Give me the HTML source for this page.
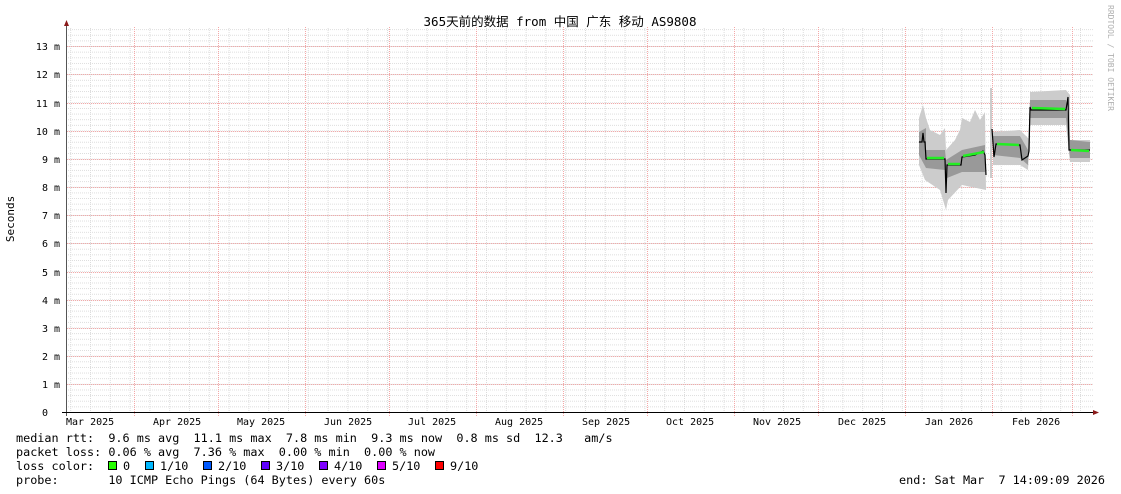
<!DOCTYPE html>
<html><head><meta charset="utf-8"><style>
html,body{margin:0;padding:0;background:#fff;}
svg{display:block;}
text{font-family:"DejaVu Sans Mono","Liberation Mono","Noto Sans CJK SC",monospace;fill:#000;white-space:pre;}
line,rect{shape-rendering:crispEdges;}
</style></head><body>
<svg width="1121" height="494" xmlns="http://www.w3.org/2000/svg">
<defs>
<pattern id="hm" x="0" y="412" width="20" height="5.63" patternUnits="userSpaceOnUse">
<line x1="0" y1="0.5" x2="20" y2="0.5" stroke="#dcdcdc" stroke-width="1" stroke-dasharray="1,1"/>
</pattern>
<pattern id="vm" x="90" y="0" width="19.8" height="10" patternUnits="userSpaceOnUse">
<line x1="0.5" y1="0" x2="0.5" y2="10" stroke="#dcdcdc" stroke-width="1" stroke-dasharray="1,1"/>
</pattern>
</defs>
<rect width="1121" height="494" fill="#fff"/>
<rect x="67" y="27" width="1026" height="385" fill="url(#hm)"/>
<rect x="67" y="27" width="1026" height="385" fill="url(#vm)"/>
<g stroke="#f4a8a8" stroke-width="1" stroke-dasharray="1,1">
<line x1="67" y1="384.5" x2="1093" y2="384.5"/><line x1="67" y1="356.5" x2="1093" y2="356.5"/>
<line x1="67" y1="328.5" x2="1093" y2="328.5"/><line x1="67" y1="300.5" x2="1093" y2="300.5"/>
<line x1="67" y1="272.5" x2="1093" y2="272.5"/><line x1="67" y1="243.5" x2="1093" y2="243.5"/>
<line x1="67" y1="215.5" x2="1093" y2="215.5"/><line x1="67" y1="187.5" x2="1093" y2="187.5"/>
<line x1="67" y1="159.5" x2="1093" y2="159.5"/><line x1="67" y1="131.5" x2="1093" y2="131.5"/>
<line x1="67" y1="103.5" x2="1093" y2="103.5"/><line x1="67" y1="74.5" x2="1093" y2="74.5"/>
<line x1="67" y1="46.5" x2="1093" y2="46.5"/>
<line x1="134.5" y1="27" x2="134.5" y2="416"/><line x1="218.5" y1="27" x2="218.5" y2="416"/>
<line x1="305.5" y1="27" x2="305.5" y2="416"/><line x1="389.5" y1="27" x2="389.5" y2="416"/>
<line x1="476.5" y1="27" x2="476.5" y2="416"/><line x1="563.5" y1="27" x2="563.5" y2="416"/>
<line x1="647.5" y1="27" x2="647.5" y2="416"/><line x1="734.5" y1="27" x2="734.5" y2="416"/>
<line x1="818.5" y1="27" x2="818.5" y2="416"/><line x1="905.5" y1="27" x2="905.5" y2="416"/>
<line x1="992.5" y1="27" x2="992.5" y2="416"/><line x1="1072.5" y1="27" x2="1072.5" y2="416"/>
</g>
<!-- data -->
<g fill="#cccccc">
<polygon points="919,118 923,105 926,118 930,130 940,135 945,128 946,150 955,140 960,130 962,118 970,122 975,110 980,120 985,112 986,190 962,185 948,200 946,210 940,190 925,180 919,165"/>
<rect x="990" y="88" width="2" height="90"/>
<polygon points="993,132 1020,130 1030,140 1030,92 1066,90 1070,95 1070,140 1090,140 1090,162 1070,162 1066,125 1030,125 1028,170 1020,165 993,165"/>
</g>
<g fill="#999">
<polygon points="919,132 926,128 926,150 945,150 946,160 962,150 985,145 985,172 962,172 947,178 945,170 926,168 919,155"/>
<polygon points="993,136 1020,136 1028,150 1030,100 1066,100 1070,140 1090,142 1090,158 1070,158 1066,118 1030,118 1028,165 1020,158 993,155"/>
</g>
<g fill="none" stroke="#000" stroke-width="1.2">
<polyline points="919,142 922,142 923,133 924,142 925,142 926,159 945,159 946,193 947,165 961,165 962,157 975,155 983,151 985,155 986,175"/>
<polyline points="992,129 994,157 996,144 1020,145 1022,160 1028,156 1029,151 1030,107 1031,110 1066,110 1068,97 1069,150 1090,150"/>
</g>
<g fill="none" stroke="#22ee22" stroke-width="2.5">
<polyline points="927,158 944,158"/><polyline points="948,164 960,164"/><polyline points="963,156 984,152"/>
<polyline points="997,144 1019,145"/><polyline points="1032,108 1065,109"/><polyline points="1071,150 1089,151"/>
</g>
<!-- axes -->
<line x1="66.5" y1="24" x2="66.5" y2="416" stroke="#555" stroke-width="1"/>
<polygon points="64,26 69,26 66.5,20" fill="#8b1a1a"/>
<line x1="62" y1="412.5" x2="1094" y2="412.5" stroke="#000" stroke-width="1"/>
<polygon points="1093,410 1093,415 1099,412.5" fill="#8b1a1a"/>
<!-- y labels -->
<g font-size="10" text-anchor="end">
<text x="48" y="416">0</text>
<text x="60" y="388">1 m</text><text x="60" y="360">2 m</text><text x="60" y="332">3 m</text>
<text x="60" y="304">4 m</text><text x="60" y="276">5 m</text><text x="60" y="247">6 m</text>
<text x="60" y="219">7 m</text><text x="60" y="191">8 m</text><text x="60" y="163">9 m</text>
<text x="60" y="135">10 m</text><text x="60" y="107">11 m</text><text x="60" y="78">12 m</text>
<text x="60" y="50">13 m</text>
</g>
<g font-size="10">
<text x="66" y="425">Mar 2025</text><text x="153" y="425">Apr 2025</text><text x="237" y="425">May 2025</text>
<text x="324" y="425">Jun 2025</text><text x="408" y="425">Jul 2025</text><text x="495" y="425">Aug 2025</text>
<text x="582" y="425">Sep 2025</text><text x="666" y="425">Oct 2025</text><text x="753" y="425">Nov 2025</text>
<text x="838" y="425">Dec 2025</text><text x="925" y="425">Jan 2026</text><text x="1012" y="425">Feb 2026</text>
</g>
<text x="560" y="26" font-size="12.5" text-anchor="middle">365天前的数据 from 中国 广东 移动 AS9808</text>
<text transform="translate(14,219) rotate(-90)" font-size="11" text-anchor="middle">Seconds</text>
<text transform="translate(1108,5) rotate(90)" font-size="8" style="fill:#b0b0b0">RRDTOOL / TOBI OETIKER</text>
<g font-size="11.8">
<text x="16" y="442">median rtt:  9.6 ms avg  11.1 ms max  7.8 ms min  9.3 ms now  0.8 ms sd  12.3   am/s</text>
<text x="16" y="456">packet loss: 0.06 % avg  7.36 % max  0.00 % min  0.00 % now</text>
<text x="16" y="470">loss color:</text>
<text x="123" y="470">0</text><text x="160" y="470">1/10</text><text x="218" y="470">2/10</text>
<text x="276" y="470">3/10</text><text x="334" y="470">4/10</text><text x="392" y="470">5/10</text><text x="450" y="470">9/10</text>
<text x="16" y="484">probe:       10 ICMP Echo Pings (64 Bytes) every 60s</text>
<text x="1105" y="484" text-anchor="end">end: Sat Mar  7 14:09:09 2026</text>
</g>
<g stroke="#000" stroke-width="1">
<rect x="108.5" y="461.5" width="8" height="8" fill="#26ff00"/>
<rect x="145.5" y="461.5" width="8" height="8" fill="#00b8ff"/>
<rect x="203.5" y="461.5" width="8" height="8" fill="#0059ff"/>
<rect x="261.5" y="461.5" width="8" height="8" fill="#5e00ff"/>
<rect x="319.5" y="461.5" width="8" height="8" fill="#7e00ff"/>
<rect x="377.5" y="461.5" width="8" height="8" fill="#dd00ff"/>
<rect x="435.5" y="461.5" width="8" height="8" fill="#ff0000"/>
</g>
</svg>
</body></html>
